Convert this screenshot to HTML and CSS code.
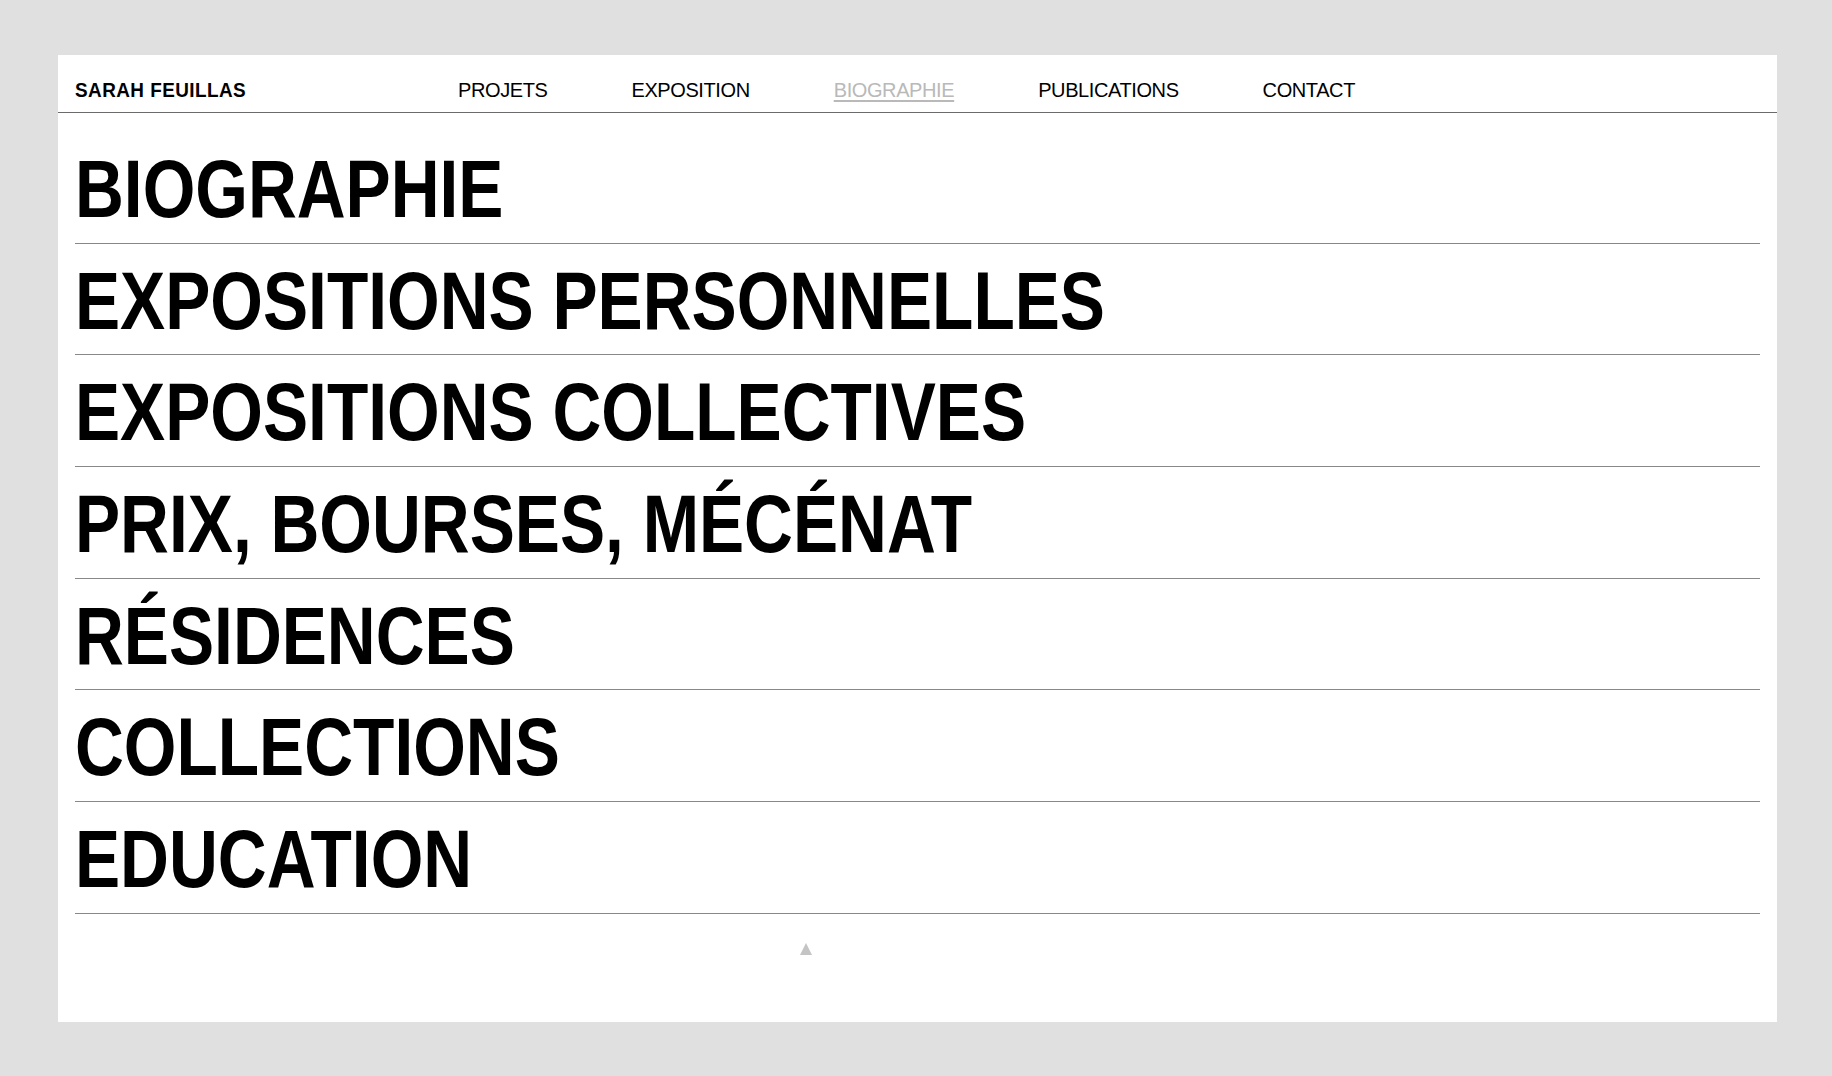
FILE: index.html
```html
<!DOCTYPE html>
<html lang="fr">
<head>
    <meta charset="UTF-8">
    <meta name="viewport" content="width=device-width, initial-scale=1.0">
    <title>Sarah Feuillas - Biographie</title>
    <link rel="stylesheet" href="styles.css">
</head>
<body>

    <div class="page">
        <header class="header">
            <a class="logo" href="#">SARAH FEUILLAS</a>
            <nav class="menu">
                <a class="menu-link" href="#">PROJETS</a>
                <a class="menu-link" href="#">EXPOSITION</a>
                <a class="menu-link active" href="#">BIOGRAPHIE</a>
                <a class="menu-link" href="#">PUBLICATIONS</a>
                <a class="menu-link" href="#">CONTACT</a>
            </nav>
        </header>

        <!-- sections de la biographie -->
        <ul class="sections">
            <li class="section"><h2 class="section-title">BIOGRAPHIE</h2></li>
            <li class="section"><h2 class="section-title">EXPOSITIONS PERSONNELLES</h2></li>
            <li class="section"><h2 class="section-title">EXPOSITIONS COLLECTIVES</h2></li>
            <li class="section"><h2 class="section-title">PRIX, BOURSES, MÉCÉNAT</h2></li>
            <li class="section"><h2 class="section-title">RÉSIDENCES</h2></li>
            <li class="section"><h2 class="section-title">COLLECTIONS</h2></li>
            <li class="section"><h2 class="section-title">EDUCATION</h2></li>
        </ul>

        <div class="to-top">
            <a class="arrow-up" href="#" title="Haut de page"></a>
        </div>
    </div>

</body>
</html>
```

FILE: styles.css
```css
body {
    margin: 0;
    padding: 55px 55px 54px 58px;
    background-color: #e0e0e0;
    font-family: "Liberation Sans", Arial, sans-serif;
    color: #000000;
}

.page {
    background-color: #ffffff;
    height: 967px;
}

.header {
    display: flex;
    align-items: flex-start;
    box-sizing: border-box;
    height: 58px;
    padding: 24px 17px 0 17px;
    border-bottom: 1px solid #6b6b6b;
}

/* condensed look: no narrow font installed, so squeeze it */
.logo {
    width: 383px;
    font-weight: bold;
    font-size: 21px;
    line-height: 22px;
    letter-spacing: 0.5px;
    color: #000000;
    text-decoration: none;
    transform: scaleX(0.9);
    transform-origin: left center;
}

.menu {
    display: flex;
    gap: 84px;
}

.menu-link {
    font-size: 20px;
    line-height: 23px;
    letter-spacing: -0.4px;
    color: #000000;
    text-decoration: none;
}

.menu-link.active {
    color: #b9b9b9;
    text-decoration: underline;
    text-decoration-thickness: 2px;
    text-underline-offset: 3px;
}

.sections {
    list-style: none;
    margin: 0;
    padding: 19px 17px 0 17px;
}

.section {
    padding: 11px 0 7.7px 0;
    border-bottom: 1px solid #888888;
}

.section-title {
    margin: 0;
    font-weight: bold;
    font-size: 82px;
    line-height: 92px;
    transform: scaleX(0.825);
    transform-origin: left center;
}

.to-top {
    padding: 29px 0 0 742px;
}

.arrow-up {
    display: block;
    width: 0;
    height: 0;
    border-left: 6.5px solid transparent;
    border-right: 6.5px solid transparent;
    border-bottom: 12px solid #c4c4c4;
}
```
